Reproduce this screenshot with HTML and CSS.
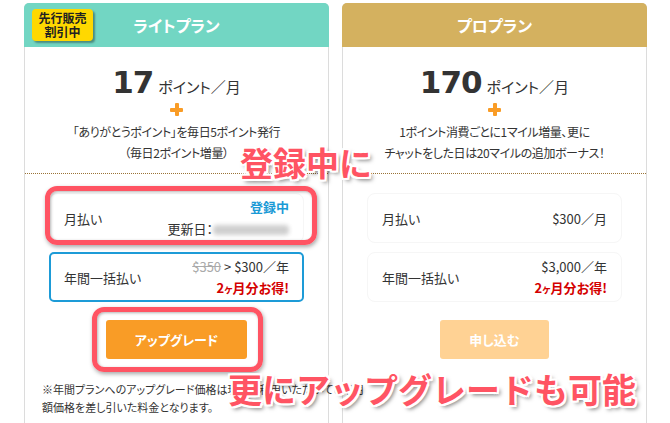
FILE: index.html
```html
<!DOCTYPE html>
<html lang="ja">
<head>
<meta charset="utf-8">
<title>プラン</title>
<link rel="stylesheet" href="styles.css">
</head>
<body>
<div class="plans">
  <div class="card lite">
    <div class="card-head">ライトプラン<span class="badge">先行販売<br>割引中</span></div>
    <div class="price"><span class="num">17</span><span class="unit">ポイント／月</span></div>
    <div class="plus"></div>
    <p class="desc">「ありがとうポイント」を毎日5ポイント発行<br>（毎日2ポイント増量）</p>
    <div class="rows">
      <div class="row">
        <span>月払い</span>
        <div class="right"><div class="status">登録中</div><div class="renew">更新日：<span class="blur"></span></div></div>
      </div>
      <div class="row selected">
        <span>年間一括払い</span>
        <div class="right"><div><s class="old">$350</s> &gt; $300／年</div><div class="deal">2<small>ヶ</small>月分お得!</div></div>
      </div>
    </div>
    <div class="btn-wrap"><button class="btn upgrade">アップグレード</button></div>
    <p class="note">※年間プランへのアップグレード価格は現在ご利用いただいている月<br>額価格を差し引いた料金となります。</p>
  </div>
  <div class="card pro">
    <div class="card-head">プロプラン</div>
    <div class="price"><span class="num">170</span><span class="unit">ポイント／月</span></div>
    <div class="plus"></div>
    <p class="desc">1ポイント消費ごとに1マイル増量、更に<br>チャットをした日は20マイルの追加ボーナス！</p>
    <div class="rows">
      <div class="row">
        <span>月払い</span>
        <div class="right">$300／月</div>
      </div>
      <div class="row">
        <span>年間一括払い</span>
        <div class="right"><div>$3,000／年</div><div class="deal">2<small>ヶ</small>月分お得!</div></div>
      </div>
    </div>
    <div class="btn-wrap"><button class="btn apply">申し込む</button></div>
  </div>
</div>
<div class="frame f1"></div>
<div class="frame f2"></div>
<div class="annot a1">登録中に</div>
<div class="annot a2">更にアップグレードも可能</div>
</body>
</html>
```
FILE: styles.css
```css
html, body {
  margin: 0;
  padding: 0;
}
body {
  background: #fff;
  font-family: "Noto Sans CJK JP", sans-serif;
  color: #333;
  width: 670px;
  height: 423px;
  overflow: hidden;
  position: relative;
}
.plans {
  display: flex;
  gap: 13px;
  padding: 3px 0 0 24px;
}
.card {
  width: 305px;
  height: 440px;
  box-sizing: border-box;
  border: 1px solid #dcdcdc;
  border-bottom: none;
  border-radius: 5px 5px 0 0;
  font-feature-settings: "palt";
}
.card-head {
  position: relative;
  height: 44px;
  margin: -1px -1px 0;
  border-radius: 5px 5px 0 0;
  display: flex;
  align-items: center;
  justify-content: center;
  color: #fff;
  font-weight: 700;
  font-size: 16px;
}
.lite .card-head { background: #72d6c3; }
.pro .card-head { background: #d4b15f; }
.badge {
  position: absolute;
  left: 8px;
  top: 6px;
  width: 61px;
  height: 32px;
  box-sizing: border-box;
  padding-top: 2px;
  background: #ffd800;
  border-radius: 4px;
  box-shadow: 2px 2px 2px rgba(0,0,0,.35);
  color: #222;
  font-size: 12px;
  line-height: 14px;
  text-align: center;
}
.price {
  padding-top: 17px;
  height: 34px;
  line-height: 34px;
  text-align: center;
}
.num {
  font: 700 31px "DejaVu Sans", "Liberation Sans", sans-serif;
  letter-spacing: -1px;
  color: #333;
}
.unit {
  font-size: 15px;
  margin-left: 5px;
}
.plus {
  position: relative;
  width: 13px;
  height: 13px;
  margin: 5px auto 0;
}
.plus::before, .plus::after {
  content: "";
  position: absolute;
  background: #f99c26;
  border-radius: 1px;
}
.plus::before { left: 0; top: 4.5px; width: 13px; height: 4px; }
.plus::after { left: 4.5px; top: 0; width: 4px; height: 13px; }
.desc {
  margin: 5px 0 0;
  padding-bottom: 10px;
  border-bottom: 1px dotted #9a7336;
  font-size: 12px;
  letter-spacing: -0.4px;
  line-height: 21px;
  text-align: center;
}
.rows {
  display: flex;
  flex-direction: column;
  gap: 9px;
  padding: 19px 24px 0;
}
.row {
  height: 50px;
  box-sizing: border-box;
  border: 1px solid #f6f6f6;
  border-radius: 8px;
  padding: 0 14px;
  display: flex;
  align-items: center;
  justify-content: space-between;
  font-size: 13px;
}
.row.selected {
  border: 2px solid #1d9bd7;
  border-radius: 5px;
  padding: 0 13px;
}
.right {
  text-align: right;
  line-height: 21px;
}
.status {
  color: #1a9ad6;
  font-weight: 700;
  line-height: 22px;
}
.renew { line-height: 22px; }
.blur {
  display: inline-block;
  width: 76px;
  height: 10px;
  vertical-align: middle;
  background: #cfcfcf;
  border-radius: 4px;
  filter: blur(2px);
}
.old { color: #aaa; }
.deal {
  color: #d40000;
  font-weight: 700;
}
.deal small { font-size: 10px; }
.btn-wrap {
  padding-top: 18px;
  text-align: center;
}
.btn {
  height: 39px;
  padding: 0 29px;
  border: none;
  border-radius: 3px;
  color: #fff;
  font: 700 13px "Noto Sans CJK JP", sans-serif;
  font-feature-settings: "palt";
}
.upgrade { background: #f99c26; }
.apply { background: #ffd294; }
.note {
  margin: 21px 0 0;
  padding-left: 17px;
  font-size: 11px;
  line-height: 18px;
  white-space: nowrap;
}
.frame {
  position: absolute;
  box-sizing: border-box;
  border: 5px solid #ff5463;
  border-radius: 12px;
  box-shadow: 1px 2px 4px rgba(0,0,0,.35), inset 1px 1px 3px rgba(0,0,0,.3);
}
.f1 { left: 45px; top: 186px; width: 272px; height: 59px; }
.f2 { left: 92px; top: 307px; width: 171px; height: 65px; }
.annot {
  position: absolute;
  color: #ff5463;
  font-weight: 700;
  line-height: 1;
  white-space: nowrap;
  text-shadow:
    -2px -2px 0 #fff, 2px -2px 0 #fff, -2px 2px 0 #fff, 2px 2px 0 #fff,
    0 -2px 0 #fff, 0 2px 0 #fff, -2px 0 0 #fff, 2px 0 0 #fff,
    3px 3px 4px rgba(0,0,0,.55);
}
.a1 { left: 240px; top: 146px; font-size: 33px; }
.a2 { left: 228px; top: 372px; font-size: 34px; }
```
